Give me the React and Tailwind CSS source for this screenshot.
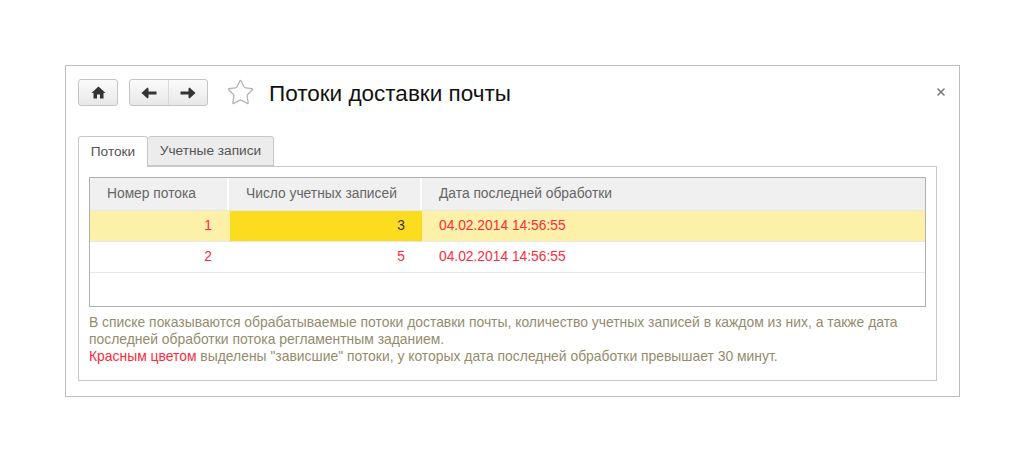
import { Star, X } from 'lucide-react';

const rows = [
  { id: 1, count: 3, date: '04.02.2014 14:56:55', active: true },
  { id: 2, count: 5, date: '04.02.2014 14:56:55', active: false },
];

function HomeIcon() {
  return (
    <svg width="15" height="13" viewBox="0 0 15 13" fill="#333">
      <path d="M7.5 0.5 L14.5 7 L12.5 7 L12.5 12.5 L9 12.5 L9 8.5 L6 8.5 L6 12.5 L2.5 12.5 L2.5 7 L0.5 7 Z" />
    </svg>
  );
}

function NavArrow({ flip }) {
  return (
    <svg width="16" height="12" viewBox="0 0 16 12" fill="#333" className={flip ? 'rotate-180' : ''}>
      <path d="M0.5 6 L6.5 0.5 L7.5 1.5 L7.5 4.5 L15.5 4.5 L15.5 7.5 L7.5 7.5 L7.5 10.5 L6.5 11.5 Z" />
    </svg>
  );
}

export default function App() {
  return (
    <div className="w-[1024px] h-[462px] bg-white pt-[65px] pl-[65px] font-['Liberation_Sans',Arial,sans-serif]">
      <div className="w-[895px] h-[332px] border border-[#bdbdbd] pt-[13px] px-[12px]">
        <div className="flex items-center h-[27px]">
          <button className="w-[40px] h-[27px] flex items-center justify-center rounded-[3px] border border-[#c4c4c4] bg-gradient-to-b from-[#fbfbfb] to-[#e8e8e8]">
            <HomeIcon />
          </button>
          <div className="ml-[11px] w-[79px] h-[27px] flex rounded-[3px] border border-[#c4c4c4] bg-gradient-to-b from-[#fbfbfb] to-[#e8e8e8]">
            <div className="w-[39px] flex items-center justify-center border-r border-[#d8d8d8]">
              <NavArrow />
            </div>
            <div className="flex-1 flex items-center justify-center">
              <NavArrow flip />
            </div>
          </div>
          <Star size={29} strokeWidth={1.1} color="#b5b5b5" className="ml-[18px]" />
          <h1 className="ml-[14px] mt-[2px] text-[22.5px] leading-[27px] text-[#111]">Потоки доставки почты</h1>
          <X size={12} strokeWidth={3} color="#777" className="ml-auto -mt-[2px]" />
        </div>

        <div className="mt-[30px] w-[859px]">
          <div className="flex h-[31px] text-[13.7px] text-[#555]">
            <div className="w-[70px] h-[31px] relative z-10 flex items-center justify-center rounded-t-[3px] border border-b-0 border-[#c8c8c8] bg-white">Потоки</div>
            <div className="w-[126px] h-[30px] flex items-center justify-center rounded-t-[3px] border border-l-0 border-[#c8c8c8] bg-[#ececec]">Учетные записи</div>
          </div>
          <div className="-mt-px h-[215px] border border-[#c8c8c8] pt-[10px] px-[10px]">
            <div className="h-[130px] border border-[#b0b0b0] text-[13.8px]">
              <div className="flex h-[33px] bg-[#f0f0f0] text-[#666] border-b border-[#e8e8e8]">
                <div className="w-[139px] pl-[17px] flex items-center border-r-2 border-white">Номер потока</div>
                <div className="w-[193px] pl-[17px] flex items-center border-r-2 border-white">Число учетных записей</div>
                <div className="flex-1 pl-[17px] flex items-center">Дата последней обработки</div>
              </div>
              {rows.map((row) => (
                <div key={row.id} className={`flex h-[31px] border-b border-[#e6e6e6] text-[#ff2a3c] ${row.active ? 'bg-[#fdf0a8]' : 'bg-white'}`}>
                  <div className="w-[139px] pr-[17px] flex items-center justify-end">{row.id}</div>
                  <div className="w-[193px] flex items-center justify-end">
                    {row.active ? <span className="pr-[17px] w-[192px] h-full flex items-center justify-end bg-[#fcdc1e] text-[#333]">{row.count}</span> : <span className="pr-[17px]">{row.count}</span>}
                  </div>
                  <div className="flex-1 pl-[17px] flex items-center">{row.date}</div>
                </div>
              ))}
            </div>
            <p className="mt-[7px] text-[13.9px] leading-[17px] text-[#948c6c]">
              В списке показываются обрабатываемые потоки доставки почты, количество учетных записей в каждом из них, а также дата<br />
              последней обработки потока регламентным заданием.<br />
              <span className="text-[#ff2a3c]">Красным цветом</span> выделены "зависшие" потоки, у которых дата последней обработки превышает 30 минут.
            </p>
          </div>
        </div>
      </div>
    </div>
  );
}
